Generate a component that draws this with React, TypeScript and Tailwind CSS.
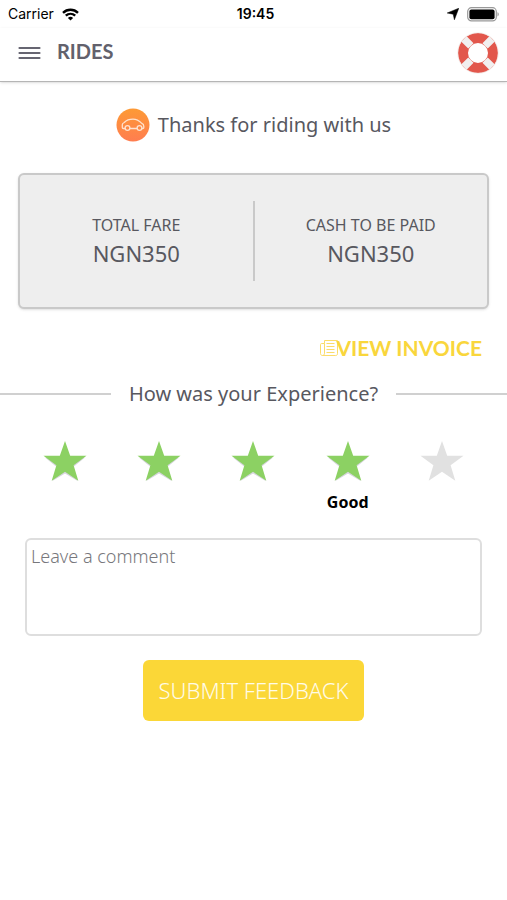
import React, { useState } from 'react'

const labels = ['Terrible', 'Bad', 'Okay', 'Good', 'Excellent']

const fares = [
  { title: 'TOTAL FARE', amount: 'NGN350' },
  { title: 'CASH TO BE PAID', amount: 'NGN350' },
]

function StatusBar() {
  return (
    <div className="grid grid-cols-3 items-center h-7 px-2 font-['Inter',sans-serif] text-sm text-black">
      <div className="flex items-center gap-2">
        <span>Carrier</span>
        <svg width="17" height="13" viewBox="0 0 17 13" fill="none" stroke="#000" strokeWidth="2.4">
          <path d="M1 4.8C5.2.7 11.8.7 16 4.8" />
          <path d="M3.8 7.7c2.7-2.5 6.7-2.5 9.4 0" />
          <path d="M8.5 12.5 5.9 9.9c1.5-1.4 3.7-1.4 5.2 0z" fill="#000" stroke="none" />
        </svg>
      </div>
      <span className="pl-1 text-center font-semibold">19:45</span>
      <div className="flex items-center justify-end gap-2">
        <svg width="12" height="12" viewBox="0 0 12 12">
          <path d="M11.8.2 7.4 11.8 6.2 6.2.2 5z" fill="#000" stroke="#000" strokeWidth="0.5" />
        </svg>
        <svg width="32" height="15" viewBox="0 0 32 15">
          <rect x="0.7" y="0.7" width="28.6" height="13.2" rx="3.8" fill="#fff" stroke="#999" strokeWidth="1.2" />
          <rect x="2.4" y="2.4" width="25.2" height="9.8" rx="2" fill="#000" />
          <path d="M30.5 5.2c1.7.7 1.7 3.6 0 4.3z" fill="#999" />
        </svg>
      </div>
    </div>
  )
}

function LifebuoyIcon() {
  return (
    <svg width="42" height="42" viewBox="0 0 42 42" fill="none">
      <circle cx="21" cy="21" r="15" stroke="#e2574c" strokeWidth="10" />
      <path
        d="M13.9 13.9 7 7M28.1 13.9 35 7M13.9 28.1 7 35M28.1 28.1 35 35"
        stroke="#f1efef"
        strokeWidth="7.5"
      />
      <circle cx="21" cy="21" r="20.3" stroke="#f3ebe9" strokeWidth="0.8" />
    </svg>
  )
}

function CarIcon() {
  return (
    <svg width="34" height="34" viewBox="0 0 34 34" fill="none">
      <defs>
        <linearGradient id="carBg" x1="0" y1="0" x2="0" y2="1">
          <stop offset="0" stopColor="#fd9a35" />
          <stop offset="1" stopColor="#ff7d50" />
        </linearGradient>
      </defs>
      <circle cx="17" cy="17" r="16.5" fill="url(#carBg)" />
      <g stroke="#ffe3cf" strokeWidth="1.3" strokeLinejoin="round" strokeLinecap="round">
        <path d="M9 20.5H7.4c-.7 0-1.1-.4-1.1-1.1v-2.6c0-1.2.8-1.9 1.9-2.3 2.6-2.6 5.2-3.3 8.8-3.3 3.8 0 6 1.4 8.8 4.2 1.4.5 2 1.5 2 2.8v1.4c0 .6-.4.9-1 .9H26" />
        <path d="M14 20.5h7" />
        <circle cx="11.5" cy="20" r="2.4" />
        <circle cx="23.5" cy="20" r="2.4" />
      </g>
    </svg>
  )
}

function InvoiceIcon() {
  return (
    <svg width="18" height="18" viewBox="0 0 18 18" fill="none" stroke="#fbdc6a" strokeWidth="1">
      <path d="M4.5 1.5h13v13.2c0 1.2-.7 1.8-1.8 1.8H2.5c-1.2 0-2-.8-2-2V5.6c0-.8.5-1.1 1.2-1.1h2.8z" />
      <path d="M4.5 4.5v9.8c0 1.3-.7 2.2-2 2.2" />
      <path d="M6.5 4.5h8M6.5 7.5h8M6.5 10.5h8M6.5 13.5h8" />
    </svg>
  )
}

function StarIcon({ filled }: { filled: boolean }) {
  return (
    <svg width="44" height="44" viewBox="0 0 44 44">
      {filled && <path d="M22 4l5 13.5h15L30.3 27l4.4 14L22 33.5 9.3 41l4.4-14L2 17.500h15z" fill="#d5d5dc" />}
      <path
        d="M22 1l5.2 14.7h16.3L30.6 25.2l4.7 15.5L22 31.8 8.7 40.7l4.7-15.500L.5 15.7h16.3z"
        fill={filled ? '#8cd163' : '#e1e1e1'}
      />
    </svg>
  )
}

export default function App() {
  const [rating, setRating] = useState(4)

  return (
    <main className="min-h-screen bg-white font-['Noto_Sans',sans-serif] text-[#58585f]">
      <StatusBar />

      <header className="flex items-center justify-between h-[54px] pl-[18px] pr-2 pb-1 border-b border-[#b5b5b5] shadow-sm">
        <div className="flex items-center gap-4">
          <button type="button" aria-label="Menu">
            <svg width="23" height="14" viewBox="0 0 23 14" stroke="#666571" strokeWidth="2.2" strokeLinecap="round">
              <path d="M1.5 2h20M1.5 7h20M1.5 12h20" />
            </svg>
          </button>
          <h1 className="pb-1 font-['Lato',sans-serif] text-xl leading-6 font-bold text-[#62616c]">RIDES</h1>
        </div>
        <button type="button" aria-label="Help">
          <LifebuoyIcon />
        </button>
      </header>

      <section className="flex items-center justify-center gap-2 mt-[26px]">
        <CarIcon />
        <h2 className="text-xl">Thanks for riding with us</h2>
      </section>

      {/* Fare summary */}
      <section className="flex items-center mx-[18px] mt-[31px] h-[136px] rounded-md border-2 border-[#c9c9c9] bg-[#eee] shadow-sm">
        {fares.map((fare, i) => (
          <div
            key={fare.title}
            className={`flex-1 flex flex-col items-center justify-center h-20 ${i > 0 ? 'border-l-2 border-[#c9c9c9]' : ''}`}
          >
            <p className="text-base leading-6">{fare.title}</p>
            <p className="text-[22px] leading-8">{fare.amount}</p>
          </div>
        ))}
      </section>

      <div className="flex justify-end mt-[25px] pr-[25px]">
        <a
          href="#invoice"
          className="flex items-center font-['Lato',sans-serif] text-[21px] leading-7 font-bold text-[#f9d63c]"
        >
          <InvoiceIcon />
          <span className="-ml-0.5">VIEW INVOICE</span>
        </a>
      </div>

      {/* Rating */}
      <section className="mt-[18px]">
        <div className="flex items-center gap-[18px]">
          <span className="flex-1 h-0.5 bg-[#d0d0d0]" />
          <h2 className="text-xl">How was your Experience?</h2>
          <span className="flex-1 h-0.5 bg-[#d0d0d0]" />
        </div>
        <div className="grid grid-cols-5 items-start mt-8 px-[18px]">
          {labels.map((label, i) => (
            <button
              key={label}
              type="button"
              aria-label={label}
              aria-pressed={i + 1 === rating}
              onClick={() => setRating(i + 1)}
              className="flex flex-col items-center gap-2"
            >
              <StarIcon filled={i < rating} />
              {i + 1 === rating && <span className="text-base leading-5 font-bold text-black">{label}</span>}
            </button>
          ))}
        </div>
      </section>

      <form className="flex flex-col items-center mt-[26px] px-[25px]" onSubmit={(e) => e.preventDefault()}>
        <textarea
          aria-label="Leave a comment"
          placeholder="Leave a comment"
          className="w-full h-[98px] px-1 py-0.5 resize-none rounded-md border-2 border-[#dedede] text-lg leading-7 font-light placeholder:text-[#77777c]"
        />
        <button type="submit" className="mt-6 h-[61px] px-4 rounded-md bg-[#fbd737] text-[22px] font-light text-[#fffbe8]">
          SUBMIT FEEDBACK
        </button>
      </form>
    </main>
  )
}
